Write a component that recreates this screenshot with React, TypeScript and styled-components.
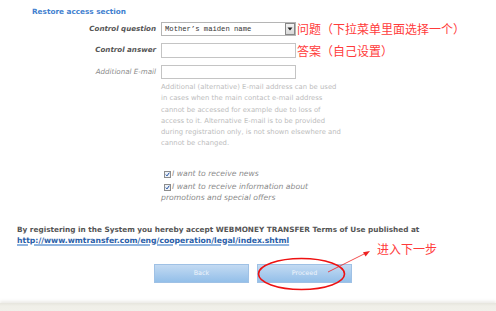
import styled, { createGlobalStyle } from 'styled-components';

const GlobalStyle = createGlobalStyle`
  body {
    margin: 0;
    background: #ffffff;
    font-family: "DejaVu Sans", Verdana, sans-serif;
  }
`;

const Page = styled.div`
  width: 496px;
  height: 311px;
  display: flex;
  flex-direction: column;
  overflow: hidden;
  background: #ffffff;
`;

const Content = styled.div`
  flex: 1;
  padding: 6px 0 0 17px;
`;

const SectionTitle = styled.h2`
  margin: 0 0 5px 15px;
  height: 11px;
  line-height: 11px;
  font-size: 7.3px;
  font-weight: bold;
  color: #3f7fcf;
`;

const FormGrid = styled.div`
  display: grid;
  grid-template-columns: 139px 1fr;
  column-gap: 5px;
  row-gap: 7px;
  align-items: start;
`;

const Label = styled.div<{ $strong?: boolean }>`
  text-align: right;
  font-size: 7.1px;
  font-style: italic;
  font-weight: ${(p) => (p.$strong ? 'bold' : 'normal')};
  color: ${(p) => (p.$strong ? '#555555' : '#8a8a8a')};
  line-height: 14px;
`;

const Field = styled.div`
  display: flex;
  align-items: center;
  gap: 1px;
`;

const SelectBox = styled.div`
  box-sizing: border-box;
  width: 135px;
  height: 14px;
  border: 1px solid #b5b5b5;
  display: flex;
  align-items: center;
  justify-content: space-between;
  padding-left: 3px;
  font-family: "Liberation Mono", monospace;
  font-size: 7.2px;
  color: #333333;
`;

const DropButton = styled.span`
  box-sizing: border-box;
  width: 10px;
  height: 12px;
  border: 1px solid #888888;
  background: linear-gradient(#f4f4f4, #d8d8d8);
  display: flex;
  align-items: center;
  justify-content: center;
`;

const TextInput = styled.div<{ $h: number }>`
  box-sizing: border-box;
  width: 135px;
  height: ${(p) => p.$h}px;
  border: 1px solid #c4c4c4;
  background: #ffffff;
`;

const Note = styled.span`
  font-family: "Noto Sans CJK SC", sans-serif;
  font-size: 12px;
  line-height: 14px;
  color: #ff3b3b;
  white-space: nowrap;
`;

const HelpText = styled.p`
  grid-column: 2;
  margin: -4px 0 0;
  font-size: 6.85px;
  line-height: 11.3px;
  color: #bdbdbd;
  white-space: nowrap;
`;

const Options = styled.div`
  grid-column: 2;
  margin-top: 11px;
  display: flex;
  flex-direction: column;
  gap: 2px;
`;

const Option = styled.div`
  font-size: 7.7px;
  font-style: italic;
  color: #8a8a8a;
  line-height: 11px;
`;

const Check = styled.span`
  box-sizing: border-box;
  display: inline-flex;
  align-items: center;
  justify-content: center;
  width: 7px;
  height: 7px;
  margin: 0 1px 0 3px;
  vertical-align: -1px;
  border: 1px solid #8c8c8c;
  background: #eef2f7;
`;

const Terms = styled.p`
  margin: 21px 0 0;
  font-size: 7.3px;
  font-weight: bold;
  color: #555555;
  line-height: 11px;
  white-space: nowrap;
`;

const TermsLink = styled.a`
  font-size: 7.7px;
  color: #2a5ea8;
  text-decoration: underline;
  text-decoration-color: #8fb3de;
  text-decoration-thickness: 2px;
  text-underline-offset: 1px;
`;

const ButtonRow = styled.div`
  position: relative;
  display: flex;
  gap: 8px;
  margin: 18px 0 0 137px;
`;

const Button = styled.div`
  box-sizing: border-box;
  width: 95px;
  height: 19px;
  border: 1px solid #9fc1e5;
  background: linear-gradient(#c3daf2, #93bfe9);
  color: #eef4fb;
  font-size: 6.4px;
  display: flex;
  align-items: center;
  justify-content: center;
`;

const NextNote = styled(Note)`
  position: absolute;
  left: 223px;
  top: -22px;
`;

const Marker = styled.svg`
  position: absolute;
  left: 0;
  top: -25px;
  overflow: visible;
  pointer-events: none;
`;

const Footer = styled.div`
  height: 8px;
  background: linear-gradient(#e6e5dd, #f0efe8 40%, #f1f0ea);
  box-shadow: 0 -2px 3px rgba(200, 198, 185, 0.35);
`;

const CheckMark = () => (
  <Check>
    <svg width="5" height="5" viewBox="0 0 5 5">
      <path d="M0.8 2.6l1.2 1.3 2.3-3.2" stroke="#1f4fa0" strokeWidth="1" fill="none" />
    </svg>
  </Check>
);

export default function App() {
  return (
    <Page>
      <GlobalStyle />
      <Content>
        <SectionTitle>Restore access section</SectionTitle>
        <FormGrid>
          <Label $strong>Control question</Label>
          <Field>
            <SelectBox>
              Mother’s maiden name
              <DropButton>
                <svg width="6" height="4" viewBox="0 0 6 4">
                  <path d="M0.5 0.5h5L3 3.5z" fill="#222" />
                </svg>
              </DropButton>
            </SelectBox>
            <Note>问题（下拉菜单里面选择一个）</Note>
          </Field>

          <Label $strong>Control answer</Label>
          <Field>
            <TextInput $h={15} />
            <Note>答案（自己设置）</Note>
          </Field>

          <Label>Additional E-mail</Label>
          <Field>
            <TextInput $h={14} />
          </Field>

          <HelpText>
            Additional (alternative) E-mail address can be used
            <br />
            in cases when the main contact e-mail address
            <br />
            cannot be accessed for example due to loss of
            <br />
            access to it. Alternative E-mail is to be provided
            <br />
            during registration only, is not shown elsewhere and
            <br />
            cannot be changed.
          </HelpText>

          <Options>
            <Option>
              <CheckMark />
              I want to receive news
            </Option>
            <Option>
              <CheckMark />
              I want to receive information about
              <br />
              promotions and special offers
            </Option>
          </Options>
        </FormGrid>

        <Terms>
          By registering in the System you hereby accept WEBMONEY TRANSFER Terms of Use published at
          <br />
          <TermsLink href="#">http://www.wmtransfer.com/eng/cooperation/legal/index.shtml</TermsLink>
        </Terms>

        <ButtonRow>
          <Button>Back</Button>
          <Button>Proceed</Button>
          <NextNote>进入下一步</NextNote>
          <Marker width="230" height="60">
            <ellipse cx="147.5" cy="35" rx="43" ry="15.5" fill="none" stroke="#ee1111" strokeWidth="1.6" />
            <line x1="174" y1="33" x2="212" y2="14" stroke="#ee2222" strokeWidth="0.8" />
            <path d="M216 12l-7 1.2 2.6 4.2z" fill="#ee2222" />
          </Marker>
        </ButtonRow>
      </Content>
      <Footer />
    </Page>
  );
}
